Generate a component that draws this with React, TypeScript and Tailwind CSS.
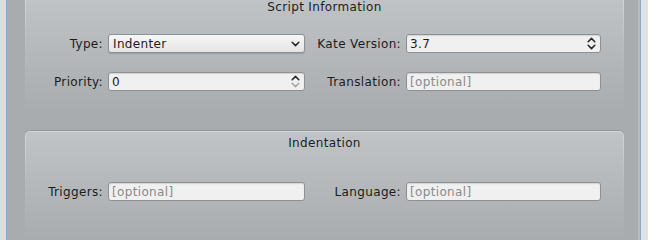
import React from 'react';

const Chevron = ({ dir, color = '#2a2a2a' }: { dir: 'up' | 'down'; color?: string }) => (
  <svg width="9" height="6" viewBox="0 0 9 6" className="block">
    <path
      d={dir === 'down' ? 'M1.2 1.3 L4.5 4.6 L7.8 1.3' : 'M1.2 4.7 L4.5 1.4 L7.8 4.7'}
      fill="none"
      stroke={color}
      strokeWidth="1.6"
      strokeLinecap="round"
      strokeLinejoin="round"
    />
  </svg>
);

const Label = ({ children }: { children: React.ReactNode }) => (
  <span className="text-right pr-[5px] text-[#1c1c1c] whitespace-nowrap">{children}</span>
);

const LineEdit = ({ placeholder }: { placeholder: string }) => (
  <div className="h-[19px] rounded-[3px] border border-[#8d9193] bg-[#f0f0f0] shadow-[inset_0_1px_1px_rgba(0,0,0,0.12)] flex items-center pl-[3px] text-[#8a8a8a] leading-none">
    {placeholder}
  </div>
);

const SpinBox = ({ value, downDisabled }: { value: string; downDisabled?: boolean }) => (
  <div className="h-[19px] rounded-[3px] border border-[#8d9193] bg-[#f0f0f0] shadow-[inset_0_1px_1px_rgba(0,0,0,0.12)] flex items-center pl-[3px] pr-[4px] text-[#1c1c1c] leading-none">
    <span className="flex-1">{value}</span>
    <div className="flex flex-col gap-[1px]">
      <Chevron dir="up" />
      <Chevron dir="down" color={downDisabled ? '#a8a8a8' : '#2a2a2a'} />
    </div>
  </div>
);

const Combo = ({ value }: { value: string }) => (
  <div className="h-[19px] rounded-[3px] border border-[#8d9193] bg-gradient-to-b from-[#f7f7f7] to-[#e4e4e4] shadow-[0_1px_1px_rgba(0,0,0,0.15)] flex items-center pl-[4px] pr-[4px] text-[#1c1c1c] leading-none">
    <span className="flex-1">{value}</span>
    <Chevron dir="down" />
  </div>
);

const GroupBox = ({ title, className, children }: { title: string; className: string; children: React.ReactNode }) => (
  <div className={`rounded-t-[5px] p-[1px] pb-0 bg-gradient-to-b from-[#d4d8da] via-[#c0c4c6]/60 to-transparent shadow-[0_-1px_0_rgba(0,0,0,0.12)] ${className}`}>
    <div className="h-full rounded-t-[4px] bg-gradient-to-b from-[#c0c4c6] to-[#a8acae] flex flex-col">
      <div className="text-center text-[#1e1e1e] pt-[2px]">{title}</div>
      {children}
    </div>
  </div>
);

export default function App() {
  return (
    <div className="w-[648px] h-[240px] overflow-hidden flex bg-[#a8acae] text-[12px] tracking-[0.35px]" style={{ fontFamily: '"DejaVu Sans", sans-serif' }}>
      <div className="w-[6px] bg-[#d9dddf]" />
      <div className="w-[1px] bg-[#8aaccb]" />
      <div className="flex-1 flex flex-col pl-[18px] pr-[14px]">
        <GroupBox title="Script Information" className="-mt-[5px] h-[117px]">
          <div className="grid grid-cols-[82px_197px_101px_195px] gap-y-[19px] mt-[18px] items-center">
            <Label>Type:</Label>
            <Combo value="Indenter" />
            <Label>Kate Version:</Label>
            <SpinBox value="3.7" />
            <Label>Priority:</Label>
            <SpinBox value="0" downDisabled />
            <Label>Translation:</Label>
            <LineEdit placeholder="[optional]" />
          </div>
        </GroupBox>
        <GroupBox title="Indentation" className="mt-[19px] flex-1">
          <div className="grid grid-cols-[82px_197px_101px_195px] mt-[30px] items-center">
            <Label>Triggers:</Label>
            <LineEdit placeholder="[optional]" />
            <Label>Language:</Label>
            <LineEdit placeholder="[optional]" />
          </div>
        </GroupBox>
      </div>
      <div className="w-[2px] bg-[#b8bcbe]" />
      <div className="w-[1px] bg-[#8aaccb]" />
      <div className="w-[7px] bg-[#dfe3e5]" />
    </div>
  );
}
